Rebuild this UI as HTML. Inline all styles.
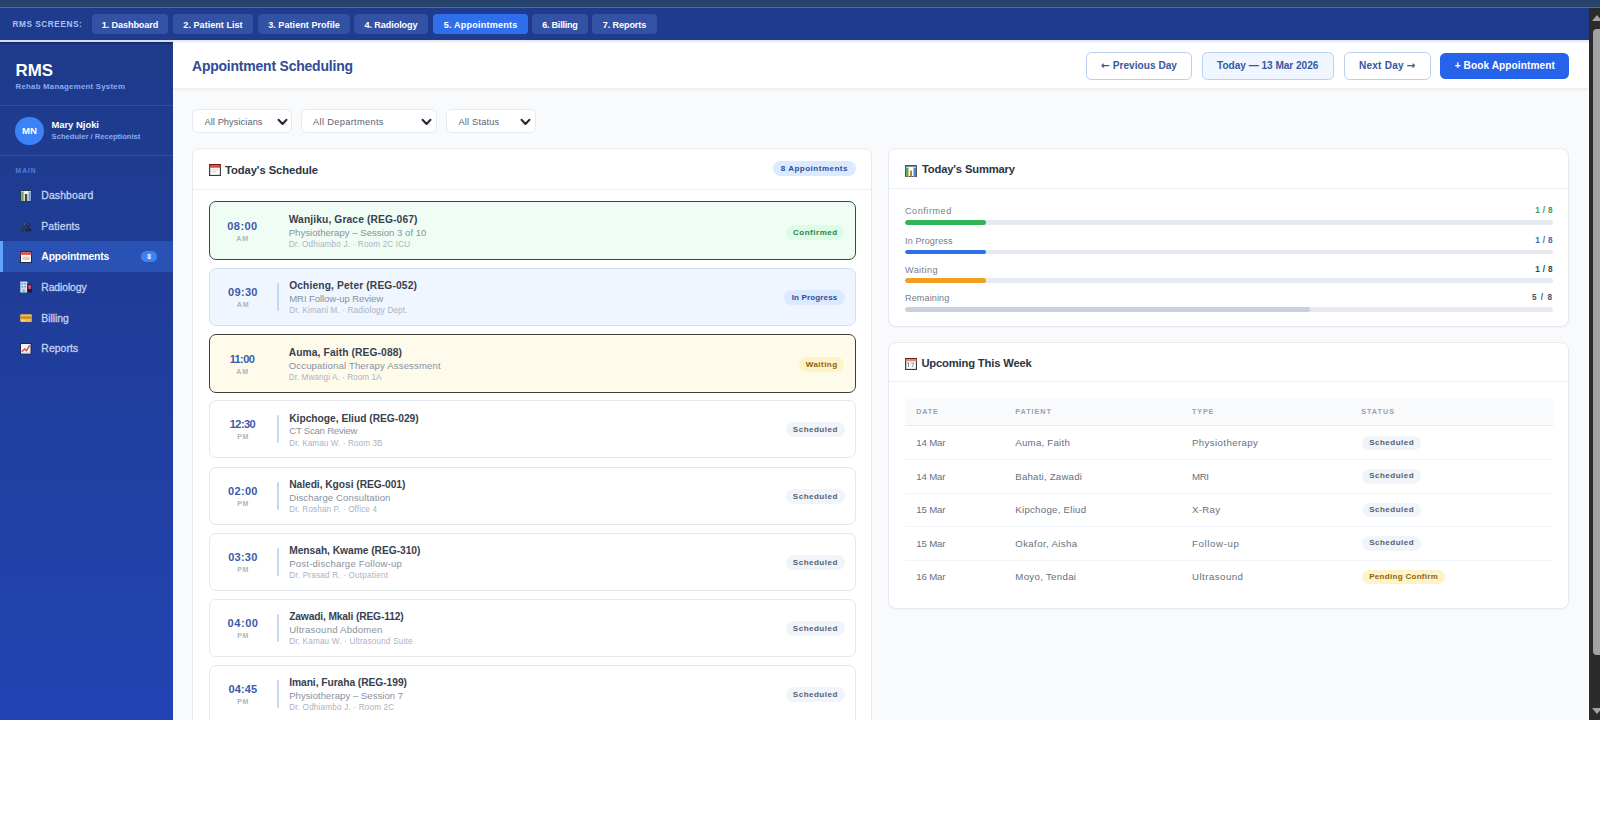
<!DOCTYPE html><html lang="en"><head>
<meta charset="utf-8">
<title>RMS - Appointment Scheduling</title>
<style>
*{box-sizing:border-box;margin:0;padding:0}
html,body{width:1600px;height:840px;overflow:hidden;background:#fff}
body{font-family:"Liberation Sans","DejaVu Sans",sans-serif;color:#1e293b;position:relative}
#chrome{position:absolute;left:0;top:0;width:1600px;height:8px;background:#26446b;border-bottom:1px solid #4a6da0}
#nav{position:absolute;left:0;top:8px;width:1588.5px;height:34.3px;background:#1f3b8e;border-bottom:2.5px solid #d3def8;z-index:3}
#nav:after{content:"";position:absolute;left:173px;right:0;bottom:-2.5px;height:2.5px;background:linear-gradient(180deg,#dfe5f0,#f7f8fb)}
#nav .lbl{position:absolute;left:12.5px;top:1px;height:31px;line-height:31px;font-size:8px;font-weight:700;letter-spacing:.75px;color:#a9c2f3;white-space:nowrap}
#nav .tab{position:absolute;top:6.2px;height:19.6px;line-height:22.8px;border-radius:4px;background:#3452a3;color:#fff;font-size:9.5px;font-weight:700;text-align:center;white-space:nowrap}
#nav .tab.on{background:#2f6fed}
#side{position:absolute;left:0;top:42.3px;width:173px;height:677.7px;background:linear-gradient(180deg,#1e3a8a 0%,#1f3d97 35%,#2144b3 100%);color:#fff}
#side:before{content:"";position:absolute;left:0;top:0;width:173px;height:3px;background:linear-gradient(180deg,rgba(8,14,60,.5),rgba(8,14,60,0))}
#main{position:absolute;left:173px;top:42px;width:1415px;height:678px;background:#f8fafc;overflow:hidden}
#hdr{position:absolute;left:0;top:0;width:1415px;height:46.5px;background:#fff;border-bottom:1px solid #e8edf3;box-shadow:0 1px 3px rgba(15,23,42,.06)}
#sb{position:absolute;left:1588.5px;top:8px;width:12px;height:712px;background:#2b2b2b}
#sb .thumb{position:absolute;left:4px;top:21px;width:10px;height:626px;border-radius:4px;background:#a3a3a3}
#sb .up{position:absolute;left:3px;top:7px;width:0;height:0;border-left:5px solid transparent;border-right:5px solid transparent;border-bottom:6px solid #a3a3a3}
#sb .dn{position:absolute;left:3px;top:700px;width:0;height:0;border-left:5px solid transparent;border-right:5px solid transparent;border-top:6px solid #a3a3a3}

#side .brand{position:absolute;left:15.5px;top:18px;font-size:17px;font-weight:700;line-height:22px;white-space:nowrap}
#side .sub{position:absolute;left:15.5px;top:40px;font-size:7.6px;font-weight:700;color:#8bacf1;line-height:10px;white-space:nowrap}
#side .hr{position:absolute;left:0;width:173px;height:1px;background:#31509f}
#side .av{position:absolute;left:15.3px;top:74.5px;width:28.4px;height:28.4px;border-radius:50%;background:#3b82f6;font-size:9.6px;font-weight:700;text-align:center;line-height:28.6px;letter-spacing:.1px}
#side .un{position:absolute;left:51.4px;top:77px;font-size:9.5px;font-weight:700;line-height:12px;white-space:nowrap}
#side .ur{position:absolute;left:51.6px;top:89.7px;font-size:7.5px;font-weight:700;color:#8bacf1;line-height:10px;white-space:nowrap}
#side .sec{position:absolute;left:15.6px;top:125px;font-size:6.5px;font-weight:700;color:#4f80dc;line-height:8px;white-space:nowrap}
#side .it{position:absolute;left:0;width:173px;height:31px;line-height:31px;font-size:10.5px;color:#c3d3f4;white-space:nowrap;-webkit-text-stroke:.3px #c3d3f4}
#side .it span.tx{position:absolute;left:41.3px;top:0}
#side .it.on{background:#2a52b5;border-left:3px solid #60a5fa;color:#fff;font-weight:700;-webkit-text-stroke:0}
#side .it.on span.tx{left:38.3px}
#side .it svg{position:absolute;left:19.6px;top:9.4px;width:12px;height:12px}
#side .it.on svg{left:16.6px}
#side .bdg{position:absolute;left:138px;top:10px;width:16px;height:11px;border-radius:6px;background:#3b82f6;font-size:6.5px;font-weight:700;line-height:11px;text-align:center;color:#fff}

#hdr h1{position:absolute;left:19px;top:14px;font-size:14.7px;font-weight:700;color:#2f4c94;line-height:20px;white-space:nowrap}
.btn{position:absolute;top:10px;height:28px;line-height:25.4px;border:1.3px solid #b9cdf0;border-radius:5.5px;background:#fff;color:#36569f;font-size:9.8px;font-weight:700;text-align:center;white-space:nowrap}
.btn .ar{font-family:"DejaVu Sans",sans-serif;font-size:10.5px;font-weight:700}
.btn.today{background:#eff6ff;border-color:#b6d0f7}
.btn.pri{top:11.2px;height:25.4px;border:none;background:#2563eb;color:#fff}
.sel{position:absolute;top:66.5px;height:24.8px;border:1px solid #e5eaf1;border-radius:5.5px;background:#fff;font-size:9px;color:#596474;line-height:23px;white-space:nowrap}
.sel span{position:absolute;left:11.5px;top:1px}
.sel svg{position:absolute;right:3.5px;top:8.4px;width:11px;height:8px}
.card{position:absolute;background:#fff;border:1px solid #e5eaf1;border-radius:8px;box-shadow:0 1px 2px rgba(15,23,42,.04)}
.card .ch{position:absolute;left:0;top:0;right:0;height:41px;border-bottom:1px solid #edf1f6}
.card .ct{position:absolute;left:32px;top:13px;font-size:11.8px;font-weight:700;color:#2a3444;line-height:16px;white-space:nowrap}
.card .ci{position:absolute;left:15.9px;top:15.4px;width:12.1px;height:12.1px}
.pill{position:absolute;border-radius:8px;font-size:7.8px;font-weight:700;text-align:center;white-space:nowrap}
.ap{position:absolute;left:15.5px;width:647.2px;height:58px;border:1px solid #e2e8f0;border-radius:7px;background:#fff}
.ap.k{border-width:1.5px;height:59px}
.ap:not(.k)>*{margin-top:-.6px}
.ap .t{position:absolute;left:0;top:16.5px;width:66.5px;text-align:center;font-size:11.2px;font-weight:700;color:#3a5bab;line-height:14px;white-space:nowrap}
.ap .m{position:absolute;left:0;top:31.5px;width:66.5px;text-align:center;font-size:6.8px;font-weight:700;color:#adb5c0;line-height:9px;white-space:nowrap}
.ap .v{position:absolute;left:67.5px;top:14.5px;width:2px;height:28px;background:#c4d8f3;border-radius:1px}
.ap .n{position:absolute;left:79.7px;top:10.8px;font-size:10.5px;font-weight:700;color:#384150;line-height:13px;white-space:nowrap}
.ap .d{position:absolute;left:79.7px;top:24.5px;font-size:9.3px;color:#87919f;line-height:12px;white-space:nowrap}
.ap .r{position:absolute;left:79.7px;top:38px;font-size:7.9px;color:#abb3bf;line-height:10px;white-space:nowrap}
.ap.k .t,.ap.k .m,.ap.k .n,.ap.k .d,.ap.k .r{margin:.2px 0 0 -.5px}
.ap .pill{top:21.5px;height:15px;line-height:15px;background:#f1f5f9;color:#556172}

.sr{position:absolute;left:16px;width:648px;height:24px}
.sr .l{position:absolute;left:0;top:0;font-size:8.8px;color:#737d8b;line-height:10px;white-space:nowrap}
.sr .c{position:absolute;right:0;top:0;font-size:8px;font-weight:700;line-height:10px;white-space:nowrap}
.sr .b{position:absolute;left:0;width:648px;height:4.5px;border-radius:3px;background:#e5e9f0;overflow:hidden}
.sr .b i{display:block;height:100%;border-radius:3px}
.th{position:absolute;left:16px;top:56.7px;width:648px;height:27px;background:#f8fafc;border-bottom:1px solid #e6ebf2}
.th span,.tr span{position:absolute;white-space:nowrap}
.th span{top:7.2px;font-size:7px;font-weight:700;color:#98a2b3;line-height:9px}
.tr{position:absolute;left:16px;width:648px;height:33.5px;border-bottom:1px solid #f0f3f7;font-size:9.4px;color:#667080;line-height:12px}
.tr span{top:10.8px}
.tr .pill{top:9.2px;left:456.8px;height:14.5px;line-height:14.5px;background:#f1f5f9;color:#556172;border-radius:7.5px}
</style>
</head>
<body>
<div id="chrome"></div>
<div id="nav">
  <span class="lbl" style="letter-spacing: 0.555px; font-size: 8.24px;">RMS SCREENS:</span>
  <span class="tab" style="left: 92px; width: 76px; letter-spacing: -0.065px; font-size: 9.05px; text-indent: -0.065px;">1. Dashboard</span>
  <span class="tab" style="left: 173px; width: 80px; letter-spacing: 0.03px; font-size: 9.05px; text-indent: 0.03px;">2. Patient List</span>
  <span class="tab" style="left: 258px; width: 92px; letter-spacing: 0.042px; font-size: 9.05px; text-indent: 0.042px;">3. Patient Profile</span>
  <span class="tab" style="left: 354px; width: 74px; letter-spacing: -0.063px; font-size: 9.05px; text-indent: -0.063px;">4. Radiology</span>
  <span class="tab on" style="left: 433px; width: 95px; letter-spacing: 0.211px; font-size: 9.05px; text-indent: 0.211px;">5. Appointments</span>
  <span class="tab" style="left: 532px; width: 56px; letter-spacing: -0.223px; font-size: 9.05px; text-indent: -0.223px;">6. Billing</span>
  <span class="tab" style="left: 592px; width: 65px; letter-spacing: -0.072px; font-size: 9.05px; text-indent: -0.072px;">7. Reports</span>
</div>
<div id="side">
  <div class="brand" style="letter-spacing: 0.011px; font-size: 16.92px;">RMS</div>
  <div class="sub" style="letter-spacing: 0.246px; font-size: 7.83px;">Rehab Management System</div>
  <div class="hr" style="top:63px"></div>
  <div class="av">MN</div>
  <div class="un" style="letter-spacing: 0.002px; font-size: 9.41px;">Mary Njoki</div>
  <div class="ur" style="letter-spacing: -0.001px; font-size: 7.61px;">Scheduler / Receptionist</div>
  <div class="hr" style="top:113px"></div>
  <div class="sec" style="letter-spacing: 1px; font-size: 6.7px;">MAIN</div>
  <div class="it" style="top:138.0px"><svg viewBox="0 0 12 12"><rect x="0.5" y="0.5" width="11" height="11" fill="#f4f6f8" stroke="#27385c" stroke-width="1"></rect><rect x="1.2" y="1.5" width="2.8" height="9.5" fill="#58a765"></rect><rect x="3.4" y="1.5" width="0.8" height="9.5" fill="#b7d9a4"></rect><rect x="4.9" y="4" width="2.4" height="7" fill="#5b3b3a"></rect><rect x="8" y="1.5" width="2.8" height="9.5" fill="#6f9bd1"></rect><rect x="8" y="1.5" width="0.8" height="9.5" fill="#c4d8f0"></rect></svg><span class="tx" style="letter-spacing: 0.142px; font-size: 10.38px;">Dashboard</span></div>
  <div class="it" style="top:168.6px"><svg viewBox="0 0 12 12"><circle cx="4.3" cy="4.2" r="2.2" fill="#2a3557"></circle><circle cx="8.3" cy="4.4" r="2" fill="#1f2947"></circle><path d="M0.6 11.2c0-2.900 1.800-4.300 3.700-4.300s3.700 1.400 3.700 4.300z" fill="#2a3557"></path><path d="M5.800 11.200c0-2.500 1.300-4 2.700-4s3 1.500 3 4z" fill="#1f2947"></path><circle cx="4.3" cy="4" r="1" fill="#56618a"></circle><circle cx="8.300" cy="4.200" r="0.900" fill="#4a557c"></circle></svg><span class="tx" style="letter-spacing: 0.143px; font-size: 10.38px;">Patients</span></div>
  <div class="it on" style="top:199.2px"><svg viewBox="0 0 12 12"><rect x="0.500" y="0.500" width="11" height="11" fill="#fdfdfd" stroke="#1d2747" stroke-width="1"></rect><rect x="0" y="0" width="12" height="1.400" fill="#5a1420"></rect><rect x="0.500" y="1.400" width="11" height="2.400" fill="#e0473d"></rect><rect x="2.400" y="5.600" width="7.200" height="3.400" fill="#f3c9b6"></rect></svg><span class="tx" style="letter-spacing: -0.15px; font-size: 10.38px;">Appointments</span><span class="bdg">8</span></div>
  <div class="it" style="top:229.8px"><svg viewBox="0 0 12 12"><rect x="0.300" y="0.500" width="7" height="11" fill="#cfe0f0"></rect><rect x="7.300" y="3" width="4.500" height="8.500" fill="#1c1b3a"></rect><rect x="1.400" y="2" width="1.800" height="1.600" fill="#7fa2d0"></rect><rect x="4.200" y="2" width="1.800" height="1.600" fill="#7fa2d0"></rect><rect x="1.400" y="5" width="1.800" height="1.600" fill="#7fa2d0"></rect><rect x="4.200" y="5" width="1.800" height="1.600" fill="#7fa2d0"></rect><rect x="2.600" y="8.300" width="2.200" height="3.200" fill="#8aa6c8"></rect><rect x="8.300" y="4" width="2.800" height="4" fill="#d8486a"></rect></svg><span class="tx" style="letter-spacing: -0.105px; font-size: 10.38px;">Radiology</span></div>
  <div class="it" style="top:260.4px"><svg viewBox="0 0 12 12"><rect x="0.200" y="2.300" width="11.600" height="7.600" rx="1" fill="#f3bd45"></rect><rect x="0.200" y="4.600" width="11.600" height="2" fill="#b98a2c"></rect><rect x="1.500" y="7.800" width="3.500" height="0.900" fill="#fbe3a1"></rect></svg><span class="tx" style="letter-spacing: -0.031px; font-size: 10.38px;">Billing</span></div>
  <div class="it" style="top:291.0px"><svg viewBox="0 0 12 12"><rect x="0.500" y="0.500" width="10.500" height="10.500" fill="#f1f1f6" stroke="#1f2a4d" stroke-width="1"></rect><path d="M1.800 8.800L4.600 6l1.800 1.600L9.800 2.400" fill="none" stroke="#d8504a" stroke-width="1.500"></path><path d="M1.500 10h8.500" stroke="#c9cbe0" stroke-width="0.800"></path></svg><span class="tx" style="letter-spacing: 0.095px; font-size: 10.38px;">Reports</span></div>
</div>
<div id="main">
  <div id="hdr">
    <h1 style="letter-spacing: -0.196px; font-size: 13.96px;">Appointment Scheduling</h1>
    <div class="btn" style="left: 913px; width: 106px; letter-spacing: 0.032px; font-size: 10.09px; text-indent: 0.032px;"><b class="ar">←</b> Previous Day</div>
    <div class="btn today" style="left: 1028.5px; width: 132.5px; letter-spacing: -0.026px; font-size: 10.09px; text-indent: -0.026px;">Today — 13 Mar 2026</div>
    <div class="btn" style="left: 1171px; width: 86.6px; letter-spacing: 0.217px; font-size: 10.09px; text-indent: 0.217px;">Next Day <b class="ar">→</b></div>
    <div class="btn pri" style="left: 1267.2px; width: 129.2px; letter-spacing: 0.103px; font-size: 10.09px; text-indent: 0.103px;">+ Book Appointment</div>
  </div>
  <div class="sel" style="left:19px;width:100px"><span style="letter-spacing: 0.064px; font-size: 9.27px;">All Physicians</span><svg viewBox="0 0 11 8"><path d="M1.5 1.8L5.5 6l4-4.2" fill="none" stroke="#1f2937" stroke-width="2" stroke-linecap="round" stroke-linejoin="round"></path></svg></div>
  <div class="sel" style="left:127.5px;width:136.1px"><span style="letter-spacing: 0.327px; font-size: 9.27px;">All Departments</span><svg viewBox="0 0 11 8"><path d="M1.5 1.8L5.5 6l4-4.2" fill="none" stroke="#1f2937" stroke-width="2" stroke-linecap="round" stroke-linejoin="round"></path></svg></div>
  <div class="sel" style="left:273px;width:89.5px"><span style="letter-spacing: 0.179px; font-size: 9.27px;">All Status</span><svg viewBox="0 0 11 8"><path d="M1.5 1.8L5.5 6l4-4.2" fill="none" stroke="#1f2937" stroke-width="2" stroke-linecap="round" stroke-linejoin="round"></path></svg></div>
  <div class="card" style="left:19px;top:106px;width:680px;height:600px">
    <div class="ch"></div><svg class="ci" viewBox="0 0 12 12"><rect x="0.6" y="0.6" width="10.8" height="10.8" fill="#fdfdfd" stroke="#3b3b3f" stroke-width="1.2"></rect><rect x="0" y="0" width="12" height="1.500" fill="#7a1818"></rect><rect x="0.600" y="1.500" width="10.800" height="2.200" fill="#d9463c"></rect><rect x="2.400" y="5.200" width="7.200" height="1" fill="#e4d4cf"></rect><rect x="2.400" y="7.200" width="5" height="1" fill="#cfcfd6"></rect></svg><div class="ct" style="letter-spacing: -0.066px; font-size: 11.21px;">Today's Schedule</div>
    <div class="pill" style="left: 579.5px; top: 12.3px; width: 83.3px; height: 15px; line-height: 15px; background: rgb(219, 234, 254); color: rgb(42, 77, 160); letter-spacing: 0.495px; font-size: 8.03px; text-indent: 0.495px;">8 Appointments</div>
    <div class="ap k" style="top:52.0px;background:#f0fdf4;border-color:#3a4745"><div class="t" style="letter-spacing: 0.434px; font-size: 11.06px; text-indent: 0.434px;">08:00</div><div class="m" style="letter-spacing: 1px; font-size: 7px; text-indent: 1px;">AM</div><div class="n" style="letter-spacing: 0.116px; font-size: 10.26px;">Wanjiku, Grace (REG-067)</div><div class="d" style="letter-spacing: 0.013px; font-size: 9.58px;">Physiotherapy – Session 3 of 10</div><div class="r" style="letter-spacing: 0.179px; font-size: 8.14px;">Dr. Odhiambo J. · Room 2C ICU</div><div class="pill" style="left: 576.7px; width: 57.8px; top: 22.7px; background: rgb(220, 252, 231); color: rgb(47, 125, 75); letter-spacing: 0.513px; font-size: 8.03px; text-indent: 0.513px;">Confirmed</div></div>
    <div class="ap" style="top:119.0px;background:#eff6ff;border-color:#cfe0f7"><div class="t" style="letter-spacing: 0.309px; font-size: 11.06px; text-indent: 0.309px;">09:30</div><div class="m" style="letter-spacing: 1px; font-size: 7px; text-indent: 1px;">AM</div><div class="v"></div><div class="n" style="letter-spacing: 0.13px; font-size: 10.26px;">Ochieng, Peter (REG-052)</div><div class="d" style="letter-spacing: -0.095px; font-size: 9.58px;">MRI Follow-up Review</div><div class="r" style="letter-spacing: 0.148px; font-size: 8.14px;">Dr. Kimani M. · Radiology Dept.</div><div class="pill" style="left: 574.9px; width: 60.2px; background: rgb(219, 234, 254); color: rgb(42, 77, 160); letter-spacing: 0.139px; font-size: 8.03px; text-indent: 0.139px;">In Progress</div></div>
    <div class="ap k" style="top:185.0px;background:#fffbeb;border-color:#3f3f3a"><div class="t" style="letter-spacing: -0.6px; font-size: 11.06px; text-indent: -0.6px;">11:00</div><div class="m" style="letter-spacing: 1px; font-size: 7px; text-indent: 1px;">AM</div><div class="n" style="letter-spacing: 0.109px; font-size: 10.26px;">Auma, Faith (REG-088)</div><div class="d" style="letter-spacing: 0.139px; font-size: 9.58px;">Occupational Therapy Assessment</div><div class="r" style="letter-spacing: 0.07px; font-size: 8.14px;">Dr. Mwangi A. · Room 1A</div><div class="pill" style="left: 589.2px; width: 45.4px; background: rgb(254, 243, 199); color: rgb(138, 100, 16); letter-spacing: 0.457px; font-size: 8.03px; text-indent: 0.457px;">Waiting</div></div>
    <div class="ap" style="top:251.3px;"><div class="t" style="letter-spacing: -0.6px; font-size: 11.06px; text-indent: -0.6px;">12:30</div><div class="m" style="letter-spacing: 0.75px; font-size: 7px; text-indent: 0.75px;">PM</div><div class="v"></div><div class="n" style="letter-spacing: -0.015px; font-size: 10.26px;">Kipchoge, Eliud (REG-029)</div><div class="d" style="letter-spacing: -0.224px; font-size: 9.58px;">CT Scan Review</div><div class="r" style="letter-spacing: 0.097px; font-size: 8.14px;">Dr. Kamau W. · Room 3B</div><div class="pill" style="left: 576.1px; width: 59px; letter-spacing: 0.494px; font-size: 8.03px; text-indent: 0.494px;">Scheduled</div></div>
    <div class="ap" style="top:318.0px;"><div class="t" style="letter-spacing: 0.309px; font-size: 11.06px; text-indent: 0.309px;">02:00</div><div class="m" style="letter-spacing: 0.75px; font-size: 7px; text-indent: 0.75px;">PM</div><div class="v"></div><div class="n" style="letter-spacing: -0.05px; font-size: 10.26px;">Naledi, Kgosi (REG-001)</div><div class="d" style="letter-spacing: 0.106px; font-size: 9.58px;">Discharge Consultation</div><div class="r" style="letter-spacing: 0.137px; font-size: 8.14px;">Dr. Roshan P. · Office 4</div><div class="pill" style="left: 576.1px; width: 59px; letter-spacing: 0.494px; font-size: 8.03px; text-indent: 0.494px;">Scheduled</div></div>
    <div class="ap" style="top:383.9px;"><div class="t" style="letter-spacing: 0.246px; font-size: 11.06px; text-indent: 0.246px;">03:30</div><div class="m" style="letter-spacing: 0.75px; font-size: 7px; text-indent: 0.75px;">PM</div><div class="v"></div><div class="n" style="letter-spacing: -0.041px; font-size: 10.26px;">Mensah, Kwame (REG-310)</div><div class="d" style="letter-spacing: 0.203px; font-size: 9.58px;">Post-discharge Follow-up</div><div class="r" style="letter-spacing: 0.211px; font-size: 8.14px;">Dr. Prasad R. · Outpatient</div><div class="pill" style="left: 576.1px; width: 59px; letter-spacing: 0.494px; font-size: 8.03px; text-indent: 0.494px;">Scheduled</div></div>
    <div class="ap" style="top:449.8px;"><div class="t" style="letter-spacing: 0.559px; font-size: 11.06px; text-indent: 0.559px;">04:00</div><div class="m" style="letter-spacing: 0.75px; font-size: 7px; text-indent: 0.75px;">PM</div><div class="v"></div><div class="n" style="letter-spacing: -0.156px; font-size: 10.26px;">Zawadi, Mkali (REG-112)</div><div class="d" style="letter-spacing: 0.222px; font-size: 9.58px;">Ultrasound Abdomen</div><div class="r" style="letter-spacing: 0.195px; font-size: 8.14px;">Dr. Kamau W. · Ultrasound Suite</div><div class="pill" style="left: 576.1px; width: 59px; letter-spacing: 0.494px; font-size: 8.03px; text-indent: 0.494px;">Scheduled</div></div>
    <div class="ap" style="top:515.8px;height:66px;"><div class="t" style="letter-spacing: 0.121px; font-size: 11.06px; text-indent: 0.121px;">04:45</div><div class="m" style="letter-spacing: 0.75px; font-size: 7px; text-indent: 0.75px;">PM</div><div class="v"></div><div class="n" style="letter-spacing: -0.059px; font-size: 10.26px;">Imani, Furaha (REG-199)</div><div class="d" style="letter-spacing: 0.024px; font-size: 9.58px;">Physiotherapy – Session 7</div><div class="r" style="letter-spacing: 0.198px; font-size: 8.14px;">Dr. Odhiambo J. · Room 2C</div><div class="pill" style="left: 576.1px; width: 59px; letter-spacing: 0.494px; font-size: 8.03px; text-indent: 0.494px;">Scheduled</div></div>
  </div>
  <div class="card" style="left:715px;top:106.3px;width:681px;height:179.2px">
    <div class="ch" style="height:40px"></div><svg class="ci" viewBox="0 0 12 12"><rect x="0.55" y="0.55" width="10.9" height="10.9" fill="#fff" stroke="#4a5a6a" stroke-width="1.1"></rect><rect x="0" y="0" width="12" height="1.6" fill="#46566a"></rect><rect x="1.100" y="2.600" width="2.700" height="8.900" fill="#4fa556"></rect><rect x="2.900" y="2.600" width="0.900" height="8.900" fill="#b4dc9c"></rect><rect x="5" y="5.5" width="2" height="6" fill="#c87a3c"></rect><rect x="8.2" y="2.6" width="2.700" height="8.900" fill="#4a79ba"></rect><rect x="8.200" y="2.600" width="0.900" height="8.900" fill="#b5cdee"></rect></svg><div class="ct" style="top: 11.7px; left: 33px; letter-spacing: -0.16px; font-size: 11.21px;">Today's Summary</div>
    <div class="sr" style="top:56.5px"><div class="l" style="letter-spacing: 0.564px; font-size: 9.06px;">Confirmed</div><div class="c" style="color: rgb(58, 154, 88); letter-spacing: 0.367px; font-size: 8.24px;">1 / 8</div><div class="b" style="top:14.65px"><i style="width:12.5%;background:#2fb45a"></i></div></div>
    <div class="sr" style="top:86.6px"><div class="l" style="letter-spacing: 0.123px; font-size: 9.06px;">In Progress</div><div class="c" style="color: rgb(68, 103, 184); letter-spacing: 0.367px; font-size: 8.24px;">1 / 8</div><div class="b" style="top:13.9px"><i style="width:12.5%;background:#2f6fe4"></i></div></div>
    <div class="sr" style="top:115.5px"><div class="l" style="letter-spacing: 0.443px; font-size: 9.06px;">Waiting</div><div class="c" style="color: rgb(59, 67, 80); letter-spacing: 0.367px; font-size: 8.24px;">1 / 8</div><div class="b" style="top:13.25px"><i style="width:12.5%;background:#f0a020"></i></div></div>
    <div class="sr" style="top:143.6px"><div class="l" style="letter-spacing: 0.125px; font-size: 9.06px;">Remaining</div><div class="c" style="color: rgb(75, 85, 99); letter-spacing: 0.992px; font-size: 8.24px;">5 / 8</div><div class="b" style="top:14.55px"><i style="width:62.5%;background:#c9d0dd"></i></div></div>
  </div>
  <div class="card" style="left:715px;top:299.8px;width:681px;height:267.3px">
    <div class="ch" style="height:39.5px"></div><svg class="ci" viewBox="0 0 12 12"><rect x="0.600" y="0.600" width="10.800" height="10.800" fill="#fdfdfd" stroke="#3b3b3f" stroke-width="1.200"></rect><rect x="0" y="0" width="12" height="1.300" fill="#6e1f17"></rect><rect x="0.600" y="1.300" width="10.800" height="1.900" fill="#e38670"></rect><rect x="3" y="4.600" width="1" height="4.300" fill="#7b8391"></rect><rect x="2.300" y="4.600" width="1.700" height="0.900" fill="#7b8391"></rect><path d="M5.600 5h3l-1.600 4" fill="none" stroke="#9aa3b0" stroke-width="1"></path></svg><div class="ct" style="top: 12.4px; left: 32.4px; letter-spacing: -0.158px; font-size: 11.21px;">Upcoming This Week</div>
    <div class="th"><span style="left: 11.2px; letter-spacing: 0.874px; font-size: 7.21px;">DATE</span><span style="left: 110.3px; letter-spacing: 0.958px; font-size: 7.21px;">PATIENT</span><span style="left: 287px; letter-spacing: 0.857px; font-size: 7.21px;">TYPE</span><span style="left: 456.2px; letter-spacing: 1px; font-size: 7.21px;">STATUS</span></div>
    <div class="tr" style="top:83.7px"><span style="left: 11.2px; letter-spacing: -0.162px; font-size: 9.68px;">14 Mar</span><span style="left: 110.3px; letter-spacing: 0.234px; font-size: 9.68px;">Auma, Faith</span><span style="left: 287px; letter-spacing: 0.384px; font-size: 9.68px;">Physiotherapy</span><span class="pill" style="width: 59.3px; letter-spacing: 0.494px; font-size: 8.03px; text-indent: 0.494px;">Scheduled</span></div>
    <div class="tr" style="top:117.22px"><span style="left: 11.2px; letter-spacing: -0.162px; font-size: 9.68px;">14 Mar</span><span style="left: 110.3px; letter-spacing: 0.201px; font-size: 9.68px;">Bahati, Zawadi</span><span style="left: 287px; letter-spacing: -0.417px; font-size: 9.68px;">MRI</span><span class="pill" style="width: 59.3px; letter-spacing: 0.494px; font-size: 8.03px; text-indent: 0.494px;">Scheduled</span></div>
    <div class="tr" style="top:150.74px"><span style="left: 11.2px; letter-spacing: -0.162px; font-size: 9.68px;">15 Mar</span><span style="left: 110.3px; letter-spacing: 0.252px; font-size: 9.68px;">Kipchoge, Eliud</span><span style="left: 287px; letter-spacing: 0.281px; font-size: 9.68px;">X-Ray</span><span class="pill" style="width: 59.3px; letter-spacing: 0.494px; font-size: 8.03px; text-indent: 0.494px;">Scheduled</span></div>
    <div class="tr" style="top:184.26px"><span style="left: 11.2px; letter-spacing: -0.162px; font-size: 9.68px;">15 Mar</span><span style="left: 110.3px; letter-spacing: 0.356px; font-size: 9.68px;">Okafor, Aisha</span><span style="left: 287px; letter-spacing: 0.62px; font-size: 9.68px;">Follow-up</span><span class="pill" style="width: 59.3px; letter-spacing: 0.494px; font-size: 8.03px; text-indent: 0.494px;">Scheduled</span></div>
    <div class="tr" style="top:217.78px;border-bottom:none"><span style="left: 11.2px; letter-spacing: -0.162px; font-size: 9.68px;">16 Mar</span><span style="left: 110.3px; letter-spacing: 0.304px; font-size: 9.68px;">Moyo, Tendai</span><span style="left: 287px; letter-spacing: 0.469px; font-size: 9.68px;">Ultrasound</span><span class="pill" style="width: 83.5px; background: rgb(254, 243, 199); color: rgb(138, 100, 16); letter-spacing: 0.294px; font-size: 8.03px; text-indent: 0.294px;">Pending Confirm</span></div>
  </div>
</div>
<div id="sb"><div class="up"></div><div class="thumb"></div><div class="dn"></div></div>


</body></html>
